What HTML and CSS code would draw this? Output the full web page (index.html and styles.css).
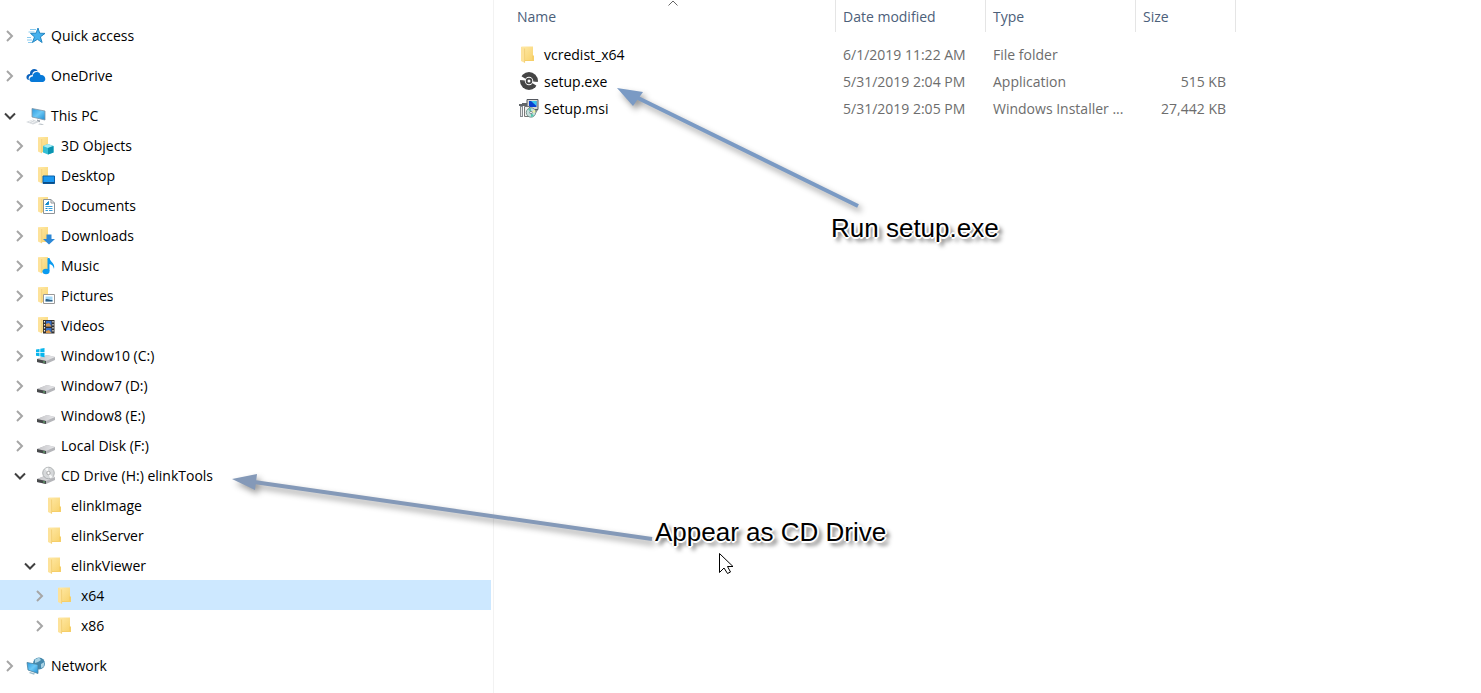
FILE: index.html
```html
<!DOCTYPE html>
<html lang="en">
<head>
<meta charset="utf-8">
<title>x64</title>
<link rel="stylesheet" href="styles.css">
</head>
<body>
<svg class="sprite" aria-hidden="true">
  <defs>
    <linearGradient id="gold" x1="0" x2="1" y1="0" y2="1"><stop offset="0" stop-color="#ffe9a6"/><stop offset="1" stop-color="#f8d36f"/></linearGradient>
    <linearGradient id="screen" x1="0" x2="1" y1="0" y2="1"><stop offset="0" stop-color="#2c9be0"/><stop offset=".5" stop-color="#6cc8f5"/><stop offset="1" stop-color="#1d8ad2"/></linearGradient>
    <linearGradient id="metal" x1="0" x2="1" y1="0" y2="0"><stop offset="0" stop-color="#c4c4c7"/><stop offset="1" stop-color="#e6e6e9"/></linearGradient>
    <symbol id="right" viewBox="0 0 10 12"><path d="M2 1l5 5-5 5" fill="none" stroke="#a6a6a6" stroke-width="2"/></symbol>
    <symbol id="down" viewBox="0 0 12 10"><path d="M1 2.500l5 5 5-5" fill="none" stroke="#404040" stroke-width="2"/></symbol>
    <symbol id="folder" viewBox="0 0 20 20"><path d="M3 1.500h11v13.500H6z" fill="url(#gold)"/><path d="M13 10.500h2V16h-9v-1h7z" fill="#f6cf68"/><path d="M2 1.500l4 2V18l-4-2z" fill="#fde29a"/><path d="M5.600 3.500v14" stroke="#efcb70" stroke-width=".8"/></symbol>
    <symbol id="base" viewBox="0 0 20 20"><path d="M3 1h9v15H6z" fill="url(#gold)"/><path d="M2 1l4 2v14.500l-4-2z" fill="#fde29a"/><path d="M5.700 3v14" stroke="#efcb70" stroke-width=".7"/></symbol>
    <symbol id="star" viewBox="0 0 20 20"><path d="M12 2l1.700 5.200 5.300.2-4.600 3.500 1.700 5.600-4.700-3.200-5 3.200 2.100-5.600-4-3.500 5.500-.2z" fill="#45b1ee" stroke="#177ebd" stroke-width=".9"/><path d="M4 3.500h6M2.500 6h6M1 11.500h4M1 14h5M2 16.500h4" stroke="#7cc4ec" stroke-width=".9"/></symbol>
    <symbol id="cloud" viewBox="0 0 20 20"><path d="M3 14C-1 13 0 8 4 8c-.5-5 6-7 8-2.500C8 4 6 7 6.500 9 3 9 2 12 3 14z" fill="#0b62bd"/><path d="M6 16c-4-.5-3-5.500.8-5.500C6.500 5 14 4.500 14.500 9c5-.6 6.500 6 2.500 7z" fill="#0779d8"/></symbol>
    <symbol id="pc" viewBox="0 0 20 20"><path d="M6 2.500l13 2.500v9L6 11z" fill="url(#screen)" stroke="#8094a4" stroke-width=".8"/><path d="M11 13.500l3 .8v2l-3-.7z" fill="#a5abb2"/><path d="M0 16l7-2.500 6 2.500-6 2.500z" fill="#d5d9dd"/><path d="M3 16l4-1.700M5.500 17l4-1.700" stroke="#fff" stroke-width=".7"/><path d="M14 17.500l4 .7-2 .8-4-.7z" fill="#b9c0c6"/></symbol>
    <symbol id="objects" viewBox="0 0 20 20"><use href="#base"/><path d="M7 10l5-2 5.500 2v6.500L12 18.500l-5-2z" fill="#35bfd4"/><path d="M7 10l5-2 5.500 2-5.500 2z" fill="#a3ebf3"/><path d="M12 12l5.500-2v6.500L12 18.500z" fill="#0b94b1"/></symbol>
    <symbol id="desktop" viewBox="0 0 20 20"><use href="#base"/><path d="M7 10h11.500v7.500H7z" fill="#1b98f0" stroke="#0b60a9"/><path d="M7 16h11.500v1.500H7z" fill="#0d4c83"/></symbol>
    <symbol id="documents" viewBox="0 0 20 20"><use href="#base"/><path d="M7.500 3.500h7.500l3.500 3.500v10.500h-11z" fill="#fff" stroke="#8e9499"/><path d="M15 3.500V7h3.500" fill="none" stroke="#8e9499"/><path d="M9.500 10.500h7M12.500 12.500h4M9.500 14.500h2.500M13 14.500h3.500" stroke="#37a0dc"/><path d="M9.500 8.500l3-3v3zM9.500 12.500h2" fill="#168acb" stroke="#168acb"/></symbol>
    <symbol id="downloads" viewBox="0 0 20 20"><use href="#base"/><path d="M10.500 8.500h5v4.500H19l-6 5.500L7 13h3.500z" fill="#2d88d6"/></symbol>
    <symbol id="music" viewBox="0 0 20 20"><use href="#base"/><path d="M12.500 3v12" stroke="#0a9bf0" stroke-width="2"/><path d="M11.500 2h2c.5 4 6 5 4.500 11-.7-3-2-4.500-5-5z" fill="#0a9bf0"/><ellipse cx="10" cy="15.500" rx="3.500" ry="2.700" fill="#0a9bf0"/></symbol>
    <symbol id="pictures" viewBox="0 0 20 20"><use href="#base"/><path d="M7.500 8.500h11v9h-11z" fill="#fff" stroke="#999"/><path d="M9.500 10.500h7v5h-7z" fill="#a4d8f7"/><path d="M9.500 13.500c2-1.500 4 1 7 .5v1.500h-7z" fill="#2d5f86"/></symbol>
    <symbol id="videos" viewBox="0 0 20 20"><use href="#base"/><path d="M7 4h11.500v13.500H7z" fill="#35322f"/><path d="M10 5h5.500v5.500H10zM10 12h5.500v5H10z" fill="#356ec8"/><path d="M10 8l3-1 2.500 3.500H10zM10 15l3-1 2.500 3H10z" fill="#d99749"/><path d="M8.500 5v12M17 5v12" stroke="#eee" stroke-width="1.200" stroke-dasharray="1.500 1.500"/></symbol>
    <symbol id="disk" viewBox="0 0 20 20"><path d="M1 13l10-4 8 2v3l-9 4-9-2z" fill="#b4b5b9"/><path d="M1 13l10-4 8 2-9 4z" fill="url(#metal)"/><path d="M1 13l9 2v3l-9-2z" fill="#484a4c"/><circle cx="8" cy="16" r=".8" fill="#65c878"/></symbol>
    <symbol id="windisk" viewBox="0 0 20 20"><use href="#disk"/><path d="M0 3.500l3.500-.6v3.300H0zM4.300 2.700L8.500 2v4.200H4.300zM0 7h3.500v3.300L0 9.700zM4.300 7h4.200v4.200l-4.200-.7z" fill="#08b5ec"/></symbol>
    <symbol id="cd" viewBox="0 0 20 20"><use href="#disk"/><circle cx="12.500" cy="7" r="5.800" fill="#d6d8da" stroke="#a1a4a6" stroke-width=".8"/><path d="M12.500 7L9 3l3-1.500zM12.500 7l4.500 4-3 1.500z" fill="#f7f8f8"/><circle cx="12.500" cy="7" r="1.700" fill="#fff" stroke="#999" stroke-width=".8"/></symbol>
    <symbol id="network" viewBox="0 0 20 20"><circle cx="13" cy="7.500" r="6" fill="#4589ad"/><path d="M9 3.500l4-2 2 2.500-3 2-3 1zM15 8l3.500-2-1 5-2.500 1z" fill="#a9d3e5"/><path d="M1 6.500l11 2v9L2 14z" fill="url(#screen)" stroke="#4a819d" stroke-width=".8"/><path d="M4 16l5 1.500-1 1.200-5-1.700z" fill="#9bbccb"/></symbol>
    <symbol id="exe" viewBox="0 0 20 20"><circle cx="10" cy="9" r="9" fill="#454545"/><path d="M10 9L-1 2v6zM10 9l11 7v-6z" fill="#fff"/><path d="M1 9.500c2-1 4-.5 6 1M19 8.500c-2 1-4 .5-6-1" stroke="#555" stroke-width="1" fill="none"/><circle cx="10" cy="9" r="4.200" fill="#fff"/><circle cx="10" cy="9" r="2.400" fill="none" stroke="#454545" stroke-width="1.800"/></symbol>
    <symbol id="msi" viewBox="0 0 20 20"><path d="M8 .5h11v10H8z" fill="#d8d8d2" stroke="#54585f"/><path d="M10 2h7.500v6H10z" fill="#0a3fd0"/><path d="M12 2h5.500v5z" fill="#3ac5ed"/><path d="M14 11h5l-2 3h-4z" fill="#848789"/><path d="M0 5h3v2H0zM3 4h5v3H3z" fill="#62666a"/><path d="M1 7h3v11H1z" fill="#888c90"/><path d="M2 8h1v9H2z" fill="#e9e9e9"/><path d="M5.500 7.500h5v10h-5z" fill="#efefec" stroke="#777"/><circle cx="12" cy="13.500" r="4.700" fill="#c5dedb" stroke="#65847f" stroke-width=".8"/><path d="M12 13.500l-3-3.500 3-1zM12 13.500l3 3.500-3 1z" fill="#55c9ae"/><path d="M12 13.500l4-3 .5 3z" fill="#edf3a3"/><circle cx="12" cy="13.500" r="1.300" fill="#fff" stroke="#67767a" stroke-width=".8"/></symbol>
  </defs>
</svg>
<div class="explorer">
  <nav class="sidebar" aria-label="Folders">
    <ul class="tree">
      <li class="node root"><button class="toggle" aria-label="Expand Quick access"><svg class="right"><use href="#right"/></svg></button><a href="#"><svg class="icon"><use href="#star"/></svg>Quick access</a></li>
      <li class="node root"><button class="toggle" aria-label="Expand OneDrive"><svg class="right"><use href="#right"/></svg></button><a href="#"><svg class="icon"><use href="#cloud"/></svg>OneDrive</a></li>
      <li class="node root"><button class="toggle" aria-label="Collapse This PC"><svg class="down"><use href="#down"/></svg></button><a href="#"><svg class="icon"><use href="#pc"/></svg>This PC</a></li>
      <li class="node level-1"><button class="toggle" aria-label="Expand 3D Objects"><svg class="right"><use href="#right"/></svg></button><a href="#"><svg class="icon"><use href="#objects"/></svg>3D Objects</a></li>
      <li class="node level-1"><button class="toggle" aria-label="Expand Desktop"><svg class="right"><use href="#right"/></svg></button><a href="#"><svg class="icon"><use href="#desktop"/></svg>Desktop</a></li>
      <li class="node level-1"><button class="toggle" aria-label="Expand Documents"><svg class="right"><use href="#right"/></svg></button><a href="#"><svg class="icon"><use href="#documents"/></svg>Documents</a></li>
      <li class="node level-1"><button class="toggle" aria-label="Expand Downloads"><svg class="right"><use href="#right"/></svg></button><a href="#"><svg class="icon"><use href="#downloads"/></svg>Downloads</a></li>
      <li class="node level-1"><button class="toggle" aria-label="Expand Music"><svg class="right"><use href="#right"/></svg></button><a href="#"><svg class="icon"><use href="#music"/></svg>Music</a></li>
      <li class="node level-1"><button class="toggle" aria-label="Expand Pictures"><svg class="right"><use href="#right"/></svg></button><a href="#"><svg class="icon"><use href="#pictures"/></svg>Pictures</a></li>
      <li class="node level-1"><button class="toggle" aria-label="Expand Videos"><svg class="right"><use href="#right"/></svg></button><a href="#"><svg class="icon"><use href="#videos"/></svg>Videos</a></li>
      <li class="node level-1"><button class="toggle" aria-label="Expand Window10"><svg class="right"><use href="#right"/></svg></button><a href="#"><svg class="icon"><use href="#windisk"/></svg>Window10 (C:)</a></li>
      <li class="node level-1"><button class="toggle" aria-label="Expand Window7"><svg class="right"><use href="#right"/></svg></button><a href="#"><svg class="icon"><use href="#disk"/></svg>Window7 (D:)</a></li>
      <li class="node level-1"><button class="toggle" aria-label="Expand Window8"><svg class="right"><use href="#right"/></svg></button><a href="#"><svg class="icon"><use href="#disk"/></svg>Window8 (E:)</a></li>
      <li class="node level-1"><button class="toggle" aria-label="Expand Local Disk"><svg class="right"><use href="#right"/></svg></button><a href="#"><svg class="icon"><use href="#disk"/></svg>Local Disk (F:)</a></li>
      <li class="node level-1"><button class="toggle" aria-label="Collapse CD Drive"><svg class="down"><use href="#down"/></svg></button><a href="#"><svg class="icon"><use href="#cd"/></svg>CD Drive (H:) elinkTools</a></li>
      <li class="node level-2"><span class="toggle"></span><a href="#"><svg class="icon"><use href="#folder"/></svg>elinkImage</a></li>
      <li class="node level-2"><span class="toggle"></span><a href="#"><svg class="icon"><use href="#folder"/></svg>elinkServer</a></li>
      <li class="node level-2"><button class="toggle" aria-label="Collapse elinkViewer"><svg class="down"><use href="#down"/></svg></button><a href="#"><svg class="icon"><use href="#folder"/></svg>elinkViewer</a></li>
      <li class="node level-3 selected"><button class="toggle" aria-label="Expand x64"><svg class="right"><use href="#right"/></svg></button><a href="#" aria-current="true"><svg class="icon"><use href="#folder"/></svg>x64</a></li>
      <li class="node level-3"><button class="toggle" aria-label="Expand x86"><svg class="right"><use href="#right"/></svg></button><a href="#"><svg class="icon"><use href="#folder"/></svg>x86</a></li>
      <li class="node root last"><button class="toggle" aria-label="Expand Network"><svg class="right"><use href="#right"/></svg></button><a href="#"><svg class="icon"><use href="#network"/></svg>Network</a></li>
    </ul>
  </nav>
  <main class="files">
    <table class="list">
      <colgroup><col class="c-name"><col class="c-wide"><col class="c-wide"><col class="c-size"></colgroup>
      <thead>
        <tr><th class="name">Name<svg class="sort" viewBox="0 0 10 6"><path d="M.500 5.500L5 1l4.500 4.500" fill="none" stroke="#666"/></svg></th><th>Date modified</th><th>Type</th><th>Size</th></tr>
      </thead>
      <tbody>
        <tr><td class="name"><a href="#"><svg class="icon"><use href="#folder"/></svg>vcredist_x64</a></td><td>6/1/2019 11:22 AM</td><td>File folder</td><td class="size"></td></tr>
        <tr><td class="name"><a href="#"><svg class="icon"><use href="#exe"/></svg>setup.exe</a></td><td>5/31/2019 2:04 PM</td><td>Application</td><td class="size">515 KB</td></tr>
        <tr><td class="name"><a href="#"><svg class="icon"><use href="#msi"/></svg>Setup.msi</a></td><td>5/31/2019 2:05 PM</td><td>Windows Installer ...</td><td class="size">27,442 KB</td></tr>
      </tbody>
    </table>
  </main>
  <svg class="arrows" width="900" height="600" aria-hidden="true">
    <g class="arrow-run"><path d="M638 98L858 206" stroke-width="4"/><path d="M617 88l26 4-10 14z" stroke="none"/></g>
    <g class="arrow-drive"><path d="M254 482l398 57" stroke-width="4"/><path d="M232 479l25-5-2 16z" stroke="none"/></g>
    <path class="pointer" d="M719.500 553.500v19l4.500-4.500 3.500 5.500 3-1.500-3-5.500h5.500z"/>
  </svg>
  <p class="note note-run">Run setup.exe</p>
  <p class="note note-drive">Appear as CD Drive</p>
</div>
</body>
</html>
```
FILE: styles.css
```css
* {
  box-sizing: border-box;
}

body {
  margin: 0;
  background: #fff;
  color: #000;
  font: 14px/20px "Open Sans", "Noto Sans", sans-serif;
}

a {
  color: inherit;
  text-decoration: none;
}

.sprite {
  position: absolute;
  width: 0;
  height: 0;
}

.explorer {
  position: relative;
  display: flex;
  min-height: 100vh;
}

.sidebar {
  flex: 0 0 494px;
  padding: 20px 2px 12px 0;
  border-right: 1px solid #f2f2f2;
}

.tree {
  margin: 0;
  padding: 0;
  list-style: none;
}

.node {
  display: flex;
  align-items: center;
  height: 30px;
  padding-top: 2px;
}

.root:not(.last) {
  margin-bottom: 10px;
}

.root:has(+ .level-1) {
  margin-bottom: 0;
}

.last {
  margin-top: 10px;
}

.level-1 {
  padding-left: 10px;
}

.level-2 {
  padding-left: 20px;
}

.level-3 {
  padding-left: 30px;
}

.selected {
  background: #cde8ff;
}

.toggle {
  display: flex;
  align-items: center;
  justify-content: center;
  width: 20px;
  height: 28px;
  margin-right: 6px;
  padding: 0;
  border: 0;
  background: none;
}

.right {
  width: 10px;
  height: 12px;
}

.down {
  width: 12px;
  height: 10px;
}

.node a,
.name a {
  display: flex;
  align-items: center;
  gap: 5px;
}

.icon {
  width: 20px;
  height: 20px;
  overflow: visible;
}

.files {
  flex: 1;
  min-width: 0;
}

.list {
  width: 742px;
  border-collapse: separate;
  border-spacing: 0;
  table-layout: fixed;
}

.c-name {
  width: 342px;
}

.c-wide {
  width: 150px;
}

.c-size {
  width: 100px;
}

.list th {
  position: relative;
  height: 32px;
  padding: 2px 7px 0;
  border-right: 1px solid #e5e5e5;
  color: #4c607a;
  font-weight: 400;
  text-align: left;
}

.list th.name {
  padding-left: 23px;
}

.sort {
  position: absolute;
  top: 0;
  left: 51%;
  width: 10px;
  height: 6px;
}

.list tbody::before {
  content: "";
  display: block;
  height: 9px;
}

.list td {
  height: 27px;
  padding: 0 7px;
  color: #6d6d6d;
  white-space: nowrap;
}

.list td.name {
  padding-left: 25px;
  color: #000;
}

.list td.size {
  padding-right: 10px;
  text-align: right;
}

.arrows {
  position: absolute;
  top: 0;
  left: 0;
  pointer-events: none;
}

.arrow-run,
.arrow-drive {
  filter: drop-shadow(3px 4px 3px rgba(0, 0, 0, .4));
}

.arrow-run {
  fill: #7a9ac4;
  stroke: #7a9ac4;
}

.arrow-drive {
  fill: #8499b8;
  stroke: #8499b8;
}

.pointer {
  fill: #fff;
  stroke: #000;
}

.note {
  position: absolute;
  margin: 0;
  font: 26px/30px "Liberation Sans", Arial, sans-serif;
  white-space: nowrap;
  text-shadow: 2px 0 #fff, -2px 0 #fff, 0 2px #fff, 0 -2px #fff, 1px 1px #fff, -1px -1px #fff, 4px 4px 4px rgba(0, 0, 0, .7);
}

.note-run {
  top: 213px;
  left: 831px;
}

.note-drive {
  top: 517px;
  left: 655px;
}
```
